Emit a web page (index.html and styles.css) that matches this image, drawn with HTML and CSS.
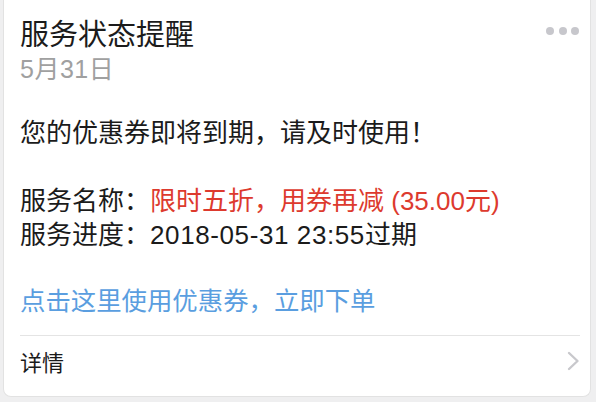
FILE: index.html
```html
<!DOCTYPE html>
<html lang="zh-CN">
<head>
<meta charset="utf-8">
<link rel="stylesheet" href="styles.css">
</head>
<body>
<div class="card">
  <div class="head">
    <div class="head-text">
      <div class="title">服务状态提醒</div>
      <div class="date">5月31日</div>
    </div>
    <div class="more"><span></span><span></span><span></span></div>
  </div>
  <div class="content">
    <p class="line">您的优惠券即将到期，请及时使用！</p>
    <p class="line blank">&nbsp;</p>
    <p class="line">服务名称：<span class="red">限时五折，用券再减 (35.00元)</span></p>
    <p class="line">服务进度：<span class="num">2018-05-31 23:55</span>过期</p>
  </div>
  <div class="link">点击这里使用优惠券，立即下单</div>
  <div class="footer">
    <span class="detail">详情</span>
    <svg class="chev" width="13" height="20" viewBox="0 0 13 20"><polyline points="2,2 10.5,10 2,18" fill="none" stroke="#c8c8cc" stroke-width="2.4" stroke-linecap="round" stroke-linejoin="round"/></svg>
  </div>
</div>
</body>
</html>
```
FILE: styles.css
```css
html, body {
  margin: 0;
  padding: 0;
  background: #efeff0;
}
body {
  width: 596px;
  height: 402px;
  overflow: hidden;
  padding: 0 5px 0 3px;
  box-sizing: border-box;
  font-family: "Liberation Sans", "Noto Sans CJK SC", sans-serif;
  color: #1b1b1b;
}
.card {
  background: #fff;
  border: 1px solid #e2e2e2;
  border-top: none;
  border-radius: 0 0 8px 8px;
  height: 397px;
  box-sizing: border-box;
  padding: 17px 10px 0 16px;
}
.head {
  display: flex;
  justify-content: space-between;
  align-items: flex-start;
}
.title {
  font-size: 29px;
  line-height: 36px;
}
.date {
  font-size: 25px;
  line-height: 32px;
  color: #a0a0a0;
  letter-spacing: 0.5px;
}
.more {
  display: flex;
  gap: 4.5px;
  margin-top: 10px;
  margin-right: 1px;
}
.more span {
  width: 8px;
  height: 8px;
  border-radius: 50%;
  background: #c7c7cc;
}
.content {
  margin-top: 31px;
}
.line {
  margin: 0;
  font-size: 26px;
  line-height: 34px;
  white-space: nowrap;
}
.num {
  letter-spacing: 0.6px;
}
.red {
  color: #dd3a2e;
}
.link {
  margin-top: 32px;
  font-size: 25.4px;
  line-height: 34px;
  color: #5a9ee0;
}
.footer {
  margin-top: 17px;
  border-top: 1px solid #e4e4e4;
  height: 50px;
  display: flex;
  align-items: center;
  justify-content: space-between;
}
.detail {
  font-size: 22px;
}
.chev {
  display: block;
}
```
